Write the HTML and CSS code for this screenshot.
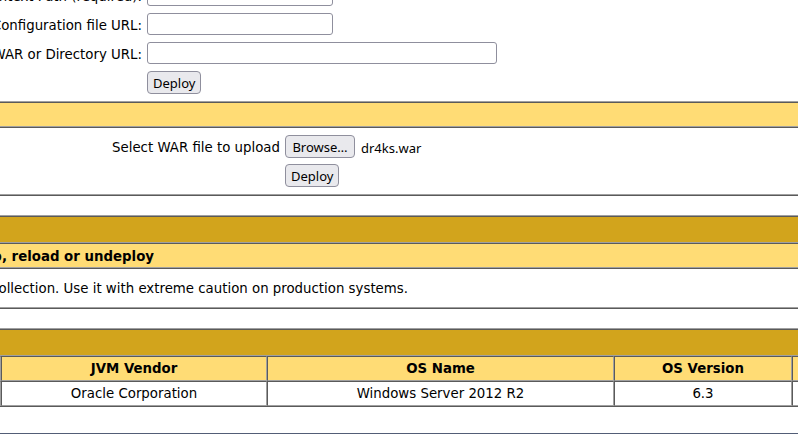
FILE: index.html
```html
<!DOCTYPE html>
<html lang="en">
<head>
<meta charset="utf-8">
<title>Tomcat Web Application Manager</title>
<link rel="stylesheet" href="styles.css">
</head>
<body>
<div class="page">
  <section class="tbl tbl--open-top">
    <div class="cell cell--open-top server-form">
      <div class="form-row">
        <span class="label-col"><span>Context Path (required):</span></span>
        <input class="text-in text-in--short" type="text">
      </div>
      <div class="form-row">
        <span class="label-col"><span>Configuration file URL:</span></span>
        <input class="text-in text-in--short" type="text">
      </div>
      <div class="form-row">
        <span class="label-col"><span>WAR or Directory URL:</span></span>
        <input class="text-in text-in--long" type="text">
      </div>
      <div class="form-row">
        <span class="label-col"></span>
        <button class="btn" type="button">Deploy</button>
      </div>
    </div>
    <div class="cell header"></div>
    <div class="cell upload-form">
      <div class="form-row">
        <span class="label-col label-col--wide"><span>Select WAR file to upload</span></span>
        <span class="file-in"><button class="btn btn--browse" type="button">Browse…</button><span class="file-name">dr4ks.war</span></span>
      </div>
      <div class="form-row">
        <span class="label-col label-col--wide"></span>
        <button class="btn" type="button">Deploy</button>
      </div>
    </div>
  </section>

  <div class="gap"></div>

  <section class="tbl">
    <div class="cell title"></div>
    <div class="cell header header--text">
      <span class="clip-end clip-end--head">Check to see if a web application has caused a memory leak on stop, reload or undeploy</span>
    </div>
    <div class="cell diag-row">
      <span class="clip-end clip-end--diag">This diagnostic check will trigger a full garbage collection. Use it with extreme caution on production systems.</span>
    </div>
  </section>

  <div class="gap"></div>

  <section class="tbl">
    <div class="cell title"></div>
    <div class="info-row info-row--head">
      <div class="icell icell--stub"></div>
      <div class="icell">JVM Vendor</div>
      <div class="icell">OS Name</div>
      <div class="icell">OS Version</div>
      <div class="icell"></div>
    </div>
    <div class="info-row">
      <div class="icell icell--stub"></div>
      <div class="icell">Oracle Corporation</div>
      <div class="icell">Windows Server 2012 R2</div>
      <div class="icell">6.3</div>
      <div class="icell"></div>
    </div>
  </section>

  <div class="footer-rule"></div>
</div>
</body>
</html>
```

FILE: styles.css
```css
* { box-sizing: border-box; }

html, body {
  margin: 0;
  padding: 0;
}

body {
  width: 798px;
  height: 440px;
  overflow: hidden;
  background: #ffffff;
  color: #000000;
  font-family: "DejaVu Sans", sans-serif;
  font-size: 13.33px;
}

.page {
  width: 798px;
}

/* table-like sections (border="1" look) */
.tbl {
  border-top: 1px solid #a0a0a0;
  border-bottom: 1px solid #5a5a5a;
}
.tbl--open-top { border-top: 0; }

.cell {
  border-top: 1px solid #5a5a5a;
  border-bottom: 1px solid #a0a0a0;
}
.cell--open-top { border-top: 0; }

.gap { height: 19px; }

.title {
  height: 27px;
  background: #D2A41C;
}

.header {
  height: 25px;
  background: #FFDC75;
}

.header--text {
  display: flex;
  align-items: center;
  font-weight: bold;
  padding-top: 2px;
}

/* deploy from server form */
.server-form {
  height: 102px;
  display: flex;
  flex-direction: column;
  justify-content: flex-end;
  overflow: hidden;
  padding-bottom: 4px;
}

.upload-form {
  height: 68px;
  padding: 4px 0;
  display: flex;
  flex-direction: column;
}

.form-row {
  flex-shrink: 0;
  height: 29px;
  padding: 3px 0 4px;
  display: flex;
  align-items: center;
}

.label-col {
  flex-shrink: 0;
  width: 142px;
  margin-right: 5px;
  padding-top: 4px;
  display: flex;
  justify-content: flex-end;
  overflow: hidden;
  white-space: nowrap;
  line-height: 16px;
}
.label-col--wide { width: 280px; }

.text-in {
  height: 22px;
  border: 1px solid #8f8f9d;
  border-radius: 3px;
  background: #ffffff;
  padding: 0 4px;
  margin: 0;
  font: inherit;
}
.text-in--short { width: 186px; }
.text-in--long { width: 350px; }

.btn {
  height: 23px;
  margin: 0;
  padding: 1px 5px 0;
  border: 1px solid #8f8f9d;
  border-radius: 4px;
  background: #e9e9ed;
  color: #000000;
  font-family: "Noto Sans", sans-serif;
  font-size: 13px;
  line-height: 20px;
}
.btn--browse {
  width: 70px;
  padding: 1px 0 0;
}

.file-in {
  display: flex;
  align-items: center;
  gap: 6px;
}

.file-name {
  font-family: "Noto Sans", sans-serif;
  font-size: 13px;
  padding-top: 3px;
}

/* clipped text whose start is scrolled out of view */
.clip-end {
  display: flex;
  justify-content: flex-end;
  overflow: hidden;
  white-space: nowrap;
  flex-shrink: 0;
}
.clip-end--head { width: 154px; }
.clip-end--diag { width: 408px; }

.diag-row {
  height: 40px;
  display: flex;
  align-items: center;
}

/* server information grid */
.info-row {
  display: grid;
  grid-template-columns: 1px 266px 347px 178px 40px;
  width: 832px;
}

.icell {
  height: 25px;
  border-style: solid;
  border-width: 1px;
  border-color: #5a5a5a #a0a0a0 #a0a0a0 #5a5a5a;
  display: flex;
  align-items: center;
  justify-content: center;
  white-space: nowrap;
  overflow: hidden;
}
.icell--stub { border-left-width: 0; }

.info-row--head .icell {
  background: #FFDC75;
  font-weight: bold;
}

.footer-rule {
  margin-top: 26px;
  height: 1px;
  background: #525D76;
}
```
